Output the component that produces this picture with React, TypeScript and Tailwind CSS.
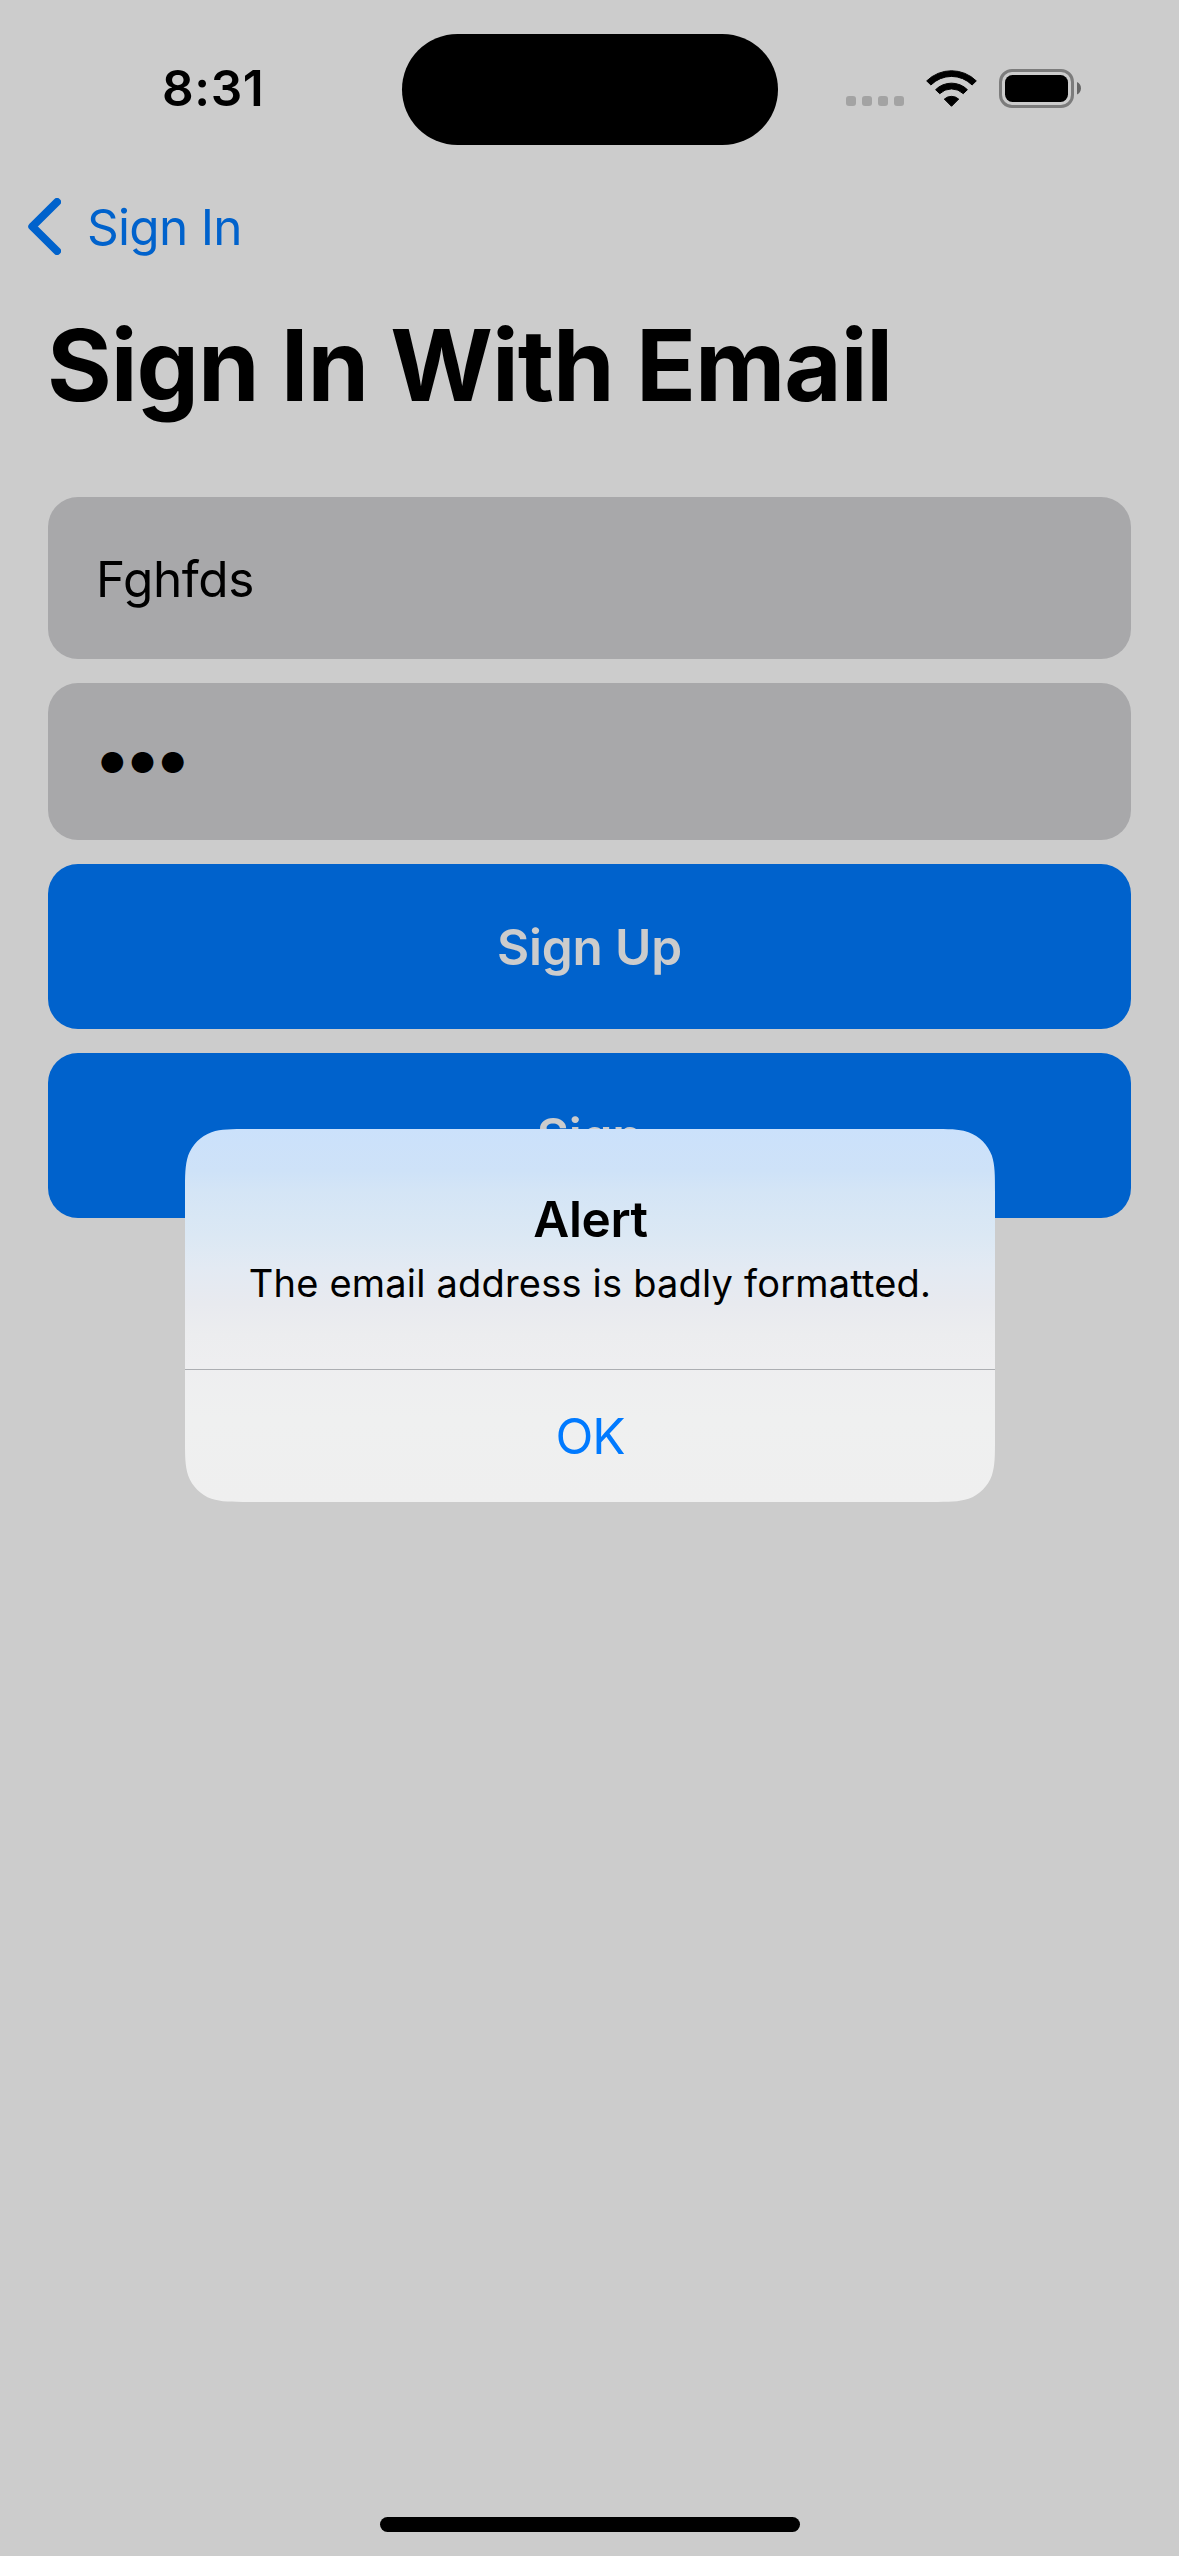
import type { ReactNode } from "react";

function WifiIcon() {
  return (
    <svg width="51" height="37" viewBox="0 0 51 37" className="block" fill="#000" stroke="#000" strokeWidth="1" strokeLinejoin="round">
      <path d="M.7 10.9A35.4 35.4 0 0 1 50.3 10.9L46.1 15A29 29 0 0 0 4.9 15Z" />
      <path d="M9.6 19.7A22.6 22.6 0 0 1 41.4 19.7L37.3 23.7A16.9 16.9 0 0 0 13.7 23.7Z" />
      <path d="M18.3 29.1A10.8 10.8 0 0 1 32.7 29.1L25.5 36.3Z" />
    </svg>
  );
}

function BatteryIcon() {
  return (
    <svg width="82" height="39" viewBox="0 0 82 39" className="block">
      <rect x="1.5" y="1.5" width="72" height="36" rx="11.5" fill="none" stroke="#7c7c7c" strokeWidth="3" />
      <rect x="6" y="6" width="63" height="27" rx="7.5" fill="#000" />
      <path d="M78 13C80.5 14 82 16.600 82 19.200C82 21.900 80.500 24.400 78 25.500Z" fill="#666" />
    </svg>
  );
}

function StatusBar() {
  return (
    <header className="grid h-[177px] grid-cols-[402px_376px_1fr] items-center">
      <time className="pl-[162px] text-[49.5px] leading-none font-semibold tracking-[0.6px]">8:31</time>
      <div className="mt-px h-[111px] rounded-full bg-black" />
      <div className="flex items-center pl-[68px]">
        <div className="mt-[25px] flex gap-[6px]">
          {[0, 1, 2, 3].map((i) => (
            <span key={i} className="size-[10px] rounded-[3px] bg-[#a3a3a3]" />
          ))}
        </div>
        <div className="ml-[22px]">
          <WifiIcon />
        </div>
        <div className="ml-[22px]">
          <BatteryIcon />
        </div>
      </div>
    </header>
  );
}

function FilledButton({ children }: { children: ReactNode }) {
  return (
    <button className="flex h-[165px] w-full items-center justify-center rounded-[30px] bg-[#0062cc] pt-[2px] text-[49.5px] leading-none font-semibold tracking-[-0.2px] text-[#cccccc]">
      {children}
    </button>
  );
}

function AlertDialog() {
  return (
    <div
      role="alertdialog"
      className="absolute top-[1129px] left-[185px] flex h-[373px] w-[810px] flex-col bg-[linear-gradient(to_bottom,#cbe1fb_0px,#cee2f8_42px,#d4e5f6_62px,#dbe8f4_105px,#e3eaf3_140px,#e8eaef_175px,#ecedef_205px,#eeeef0_235px,#eff0f0_290px,#efefef_373px)] text-center [clip-path:path('M64.200_0L745.800_0C764.300_0_773.500_0_781.900_2.750L783.500_3.150C794.340_7.100_802.900_15.660_806.850_26.500C810_36.500_810_45.700_810_64.200L810_308.800C810_327.300_810_336.500_806.850_346.500C802.900_357.340_794.340_365.900_783.500_369.850C773.500_373_764.300_373_745.800_373L64.200_373C45.700_373_36.500_373_26.500_369.850C15.660_365.900_7.100_357.340_3.150_346.500C0_336.500_0_327.300_0_308.800L0_64.200C0_45.700_0_36.500_3.150_26.500C7.100_15.660_15.660_7.100_26.500_3.150C36.500_0_45.700_0_64.200_0Z')]"
    >
      <div className="h-[241px] border-b border-[#acaeb2] pt-[60px]">
        <h2 className="pl-px text-[49.5px] leading-[60px] font-semibold tracking-[-0.4px]">Alert</h2>
        <p className="mt-[10px] text-[38px] leading-[48px] tracking-[0.2px]">The email address is badly formatted.</p>
      </div>
      <button className="grow pt-[2px] text-[49.5px] leading-none tracking-[-1px] text-[#007aff]">OK</button>
    </div>
  );
}

export default function App() {
  return (
    <div className="relative flex h-[2556px] w-[1179px] flex-col overflow-hidden bg-[#cccccc] font-['Inter',sans-serif] text-black">
      <StatusBar />

      <nav className="flex h-[99px] items-center pl-[28px] text-[#0062cc]">
        <svg width="33" height="57" viewBox="0 0 33 57" className="block" fill="none" stroke="currentColor" strokeWidth="8" strokeLinecap="round" strokeLinejoin="round">
          <path d="M29 4L4.300 28.500L29 53" />
        </svg>
        <span className="ml-[26px] pt-[2px] text-[49.5px] leading-none tracking-[-0.7px]">Sign In</span>
      </nav>

      <h1 className="pl-[47px] text-[99px] leading-[178px] font-bold tracking-[-1.1px]">Sign In With Email</h1>

      <main className="mt-[43px] flex flex-col gap-[24px] px-[48px]">
        <div className="flex h-[162px] items-center rounded-[30px] bg-[#a8a8aa] pt-[3px] pl-[48px] text-[49.5px] leading-none tracking-[-0.35px]">
          Fghfds
        </div>
        <div className="flex h-[157px] items-center rounded-[30px] bg-[#a8a8aa] pt-px pl-[51px] text-[29px] leading-none tracking-[3.8px]">
          ●●●
        </div>
        <FilledButton>Sign Up</FilledButton>
        <FilledButton>Sign</FilledButton>
      </main>

      <div className="mx-auto mt-auto mb-[24px] h-[15px] w-[420px] rounded-full bg-black" />

      <AlertDialog />
    </div>
  );
}
